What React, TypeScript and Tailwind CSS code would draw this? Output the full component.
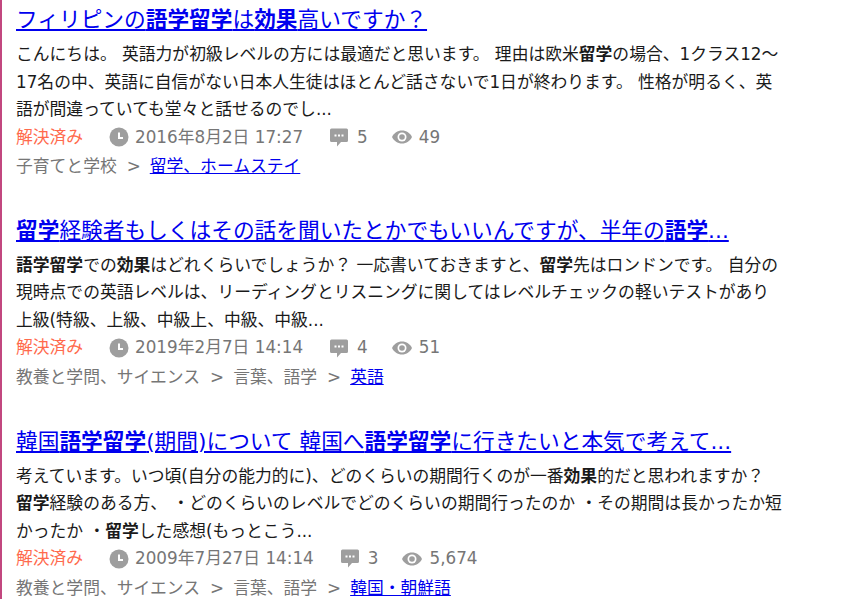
import type { ReactNode } from "react";

function ClockIcon() {
  return (
    <svg width="20" height="20" viewBox="0 0 20 20" className="shrink-0">
      <circle cx="10" cy="10" r="9.5" fill="#9e9e9e" />
      <path d="M10 5.5V11H14" fill="none" stroke="#fff" strokeWidth="2" />
    </svg>
  );
}

function CommentIcon() {
  return (
    <svg width="18" height="19" viewBox="0 0 18 19" className="shrink-0">
      <path d="M1.5 0.5H16.5A1.5 1.5 0 0 1 18 2V12.5A1.5 1.5 0 0 1 16.5 14H11L7 18.5V14H1.5A1.5 1.5 0 0 1 0 12.5V2A1.5 1.5 0 0 1 1.5 0.5Z" fill="#9e9e9e" />
      <rect x="4.5" y="6.5" width="2" height="2" fill="#fff" />
      <rect x="8" y="6.5" width="2" height="2" fill="#fff" />
      <rect x="11.5" y="6.5" width="2" height="2" fill="#fff" />
    </svg>
  );
}

function EyeIcon() {
  return (
    <svg width="20" height="14" viewBox="0 0 20 14" className="shrink-0">
      <path d="M0 7C2 3 5.5 0.5 10 0.5S18 3 20 7C18 11 14.500 13.500 10 13.500S2 11 0 7Z" fill="#9e9e9e" />
      <circle cx="10" cy="7" r="4.500" fill="#fff" />
      <circle cx="10" cy="7" r="2.800" fill="#9e9e9e" />
    </svg>
  );
}

function Result({
  title,
  body,
  date,
  comments,
  views,
  path,
  link,
}: {
  title: ReactNode;
  body: ReactNode;
  date: string;
  comments: string;
  views: string;
  path: string[];
  link: string;
}) {
  return (
    <article className="mb-[35px]">
      <h3 className="text-[21.7px] leading-[30px] font-normal whitespace-nowrap">
        <a href="#" className="text-[#0000ee] underline">
          {title}
        </a>
      </h3>
      <p className="mt-[6px] text-[16.8px] leading-[27.6px] text-[#1a1a1a]">{body}</p>
      <div className="flex items-center h-[27px] text-[16.8px] text-[#767676] whitespace-nowrap">
        <span className="text-[#ff6a4d] w-[93px]">解決済み</span>
        <span className="flex items-center gap-[6px] mr-[27px]">
          <ClockIcon />
          {date}
        </span>
        <span className="flex items-center gap-[9px] mr-[24px]">
          <CommentIcon />
          {comments}
        </span>
        <span className="flex items-center gap-[7px]">
          <EyeIcon />
          {views}
        </span>
      </div>
      <div className="mt-[2px] flex items-center h-[28px] text-[16.8px] text-[#767676] whitespace-nowrap">
        {path.map((p) => (
          <span key={p} className="mr-[9px]">
            {p}
            <span className="ml-[10px]">&gt;</span>
          </span>
        ))}
        <a href="#" className="text-[#0000ee] underline">
          {link}
        </a>
      </div>
    </article>
  );
}

export default function App() {
  return (
    <div className="h-[599px] overflow-hidden bg-white border-l-2 border-[#c2477f] pl-[14px] font-['DejaVu_Sans','Noto_Sans_CJK_JP',sans-serif]">
      <div className="w-[768px] pt-[5px]">
        <Result
          title={<>フィリピンの<b>語学留学</b>は<b>効果</b>高いですか？</>}
          body={<>こんにちは。 英語力が初級レベルの方には最適だと思います。 理由は欧米<b>留学</b>の場合、1クラス12～17名の中、英語に自信がない日本人生徒はほとんど話さないで1日が終わります。 性格が明るく、英語が間違っていても堂々と話せるのでし...</>}
          date="2016年8月2日 17:27"
          comments="5"
          views="49"
          path={["子育てと学校"]}
          link="留学、ホームステイ"
        />
        <Result
          title={<><b>留学</b>経験者もしくはその話を聞いたとかでもいいんですが、半年の<b>語学</b>...</>}
          body={<><b>語学留学</b>での<b>効果</b>はどれくらいでしょうか？ 一応書いておきますと、<b>留学</b>先はロンドンです。 自分の現時点での英語レベルは、リーディングとリスニングに関してはレベルチェックの軽いテストがあり上級(特級、上級、中級上、中級、中級...</>}
          date="2019年2月7日 14:14"
          comments="4"
          views="51"
          path={["教養と学問、サイエンス", "言葉、語学"]}
          link="英語"
        />
        <Result
          title={<>韓国<b>語学留学</b>(期間)について 韓国へ<b>語学留学</b>に行きたいと本気で考えて...</>}
          body={<>考えています。いつ頃(自分の能力的に)、どのくらいの期間行くのが一番<b>効果</b>的だと思われますか？ <b>留学</b>経験のある方、 ・どのくらいのレベルでどのくらいの期間行ったのか ・その期間は長かったか短かったか ・<b>留学</b>した感想(もっとこう...</>}
          date="2009年7月27日 14:14"
          comments="3"
          views="5,674"
          path={["教養と学問、サイエンス", "言葉、語学"]}
          link="韓国・朝鮮語"
        />
      </div>
    </div>
  );
}
